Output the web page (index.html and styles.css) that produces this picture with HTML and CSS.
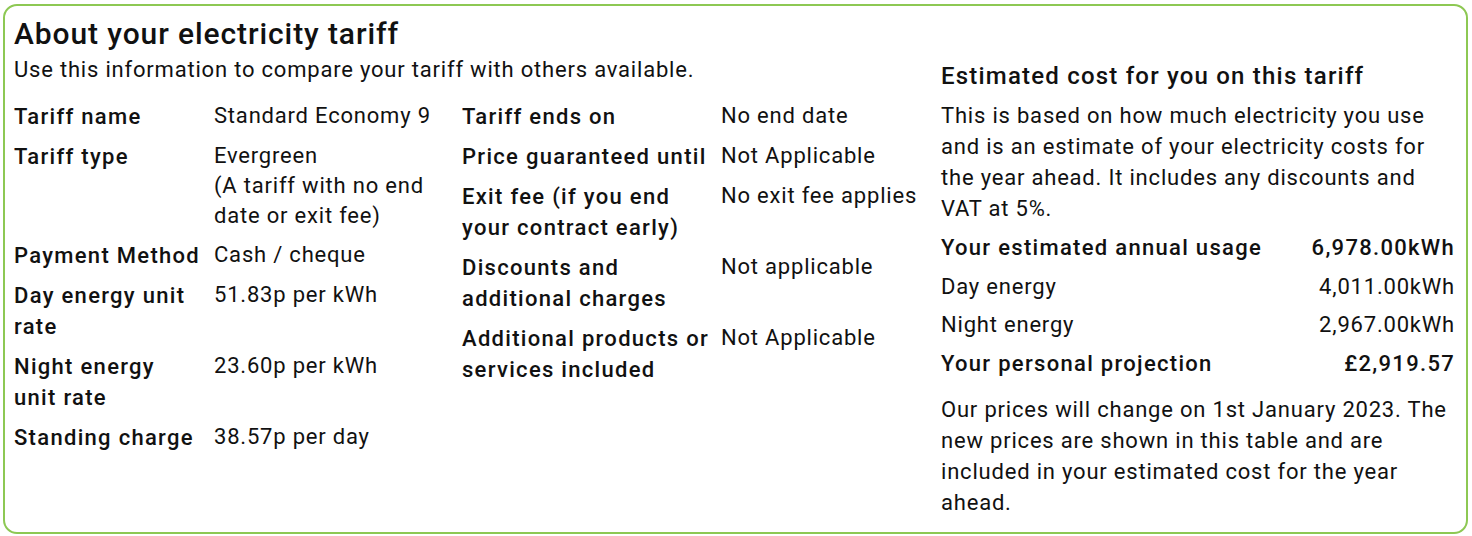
FILE: index.html
```html
<!DOCTYPE html>
<html lang="en">
<head>
<meta charset="utf-8">
<title>About your electricity tariff</title>
<link rel="stylesheet" href="styles.css">
</head>
<body>
<div class="card">
  <section class="about">
    <h1 class="title">About your electricity tariff</h1>
    <p class="subtitle">Use this information to compare your tariff with others available.</p>
    <div class="tables">
      <dl class="facts facts-a">
        <dt>Tariff name</dt><dd>Standard Economy 9</dd>
        <dt>Tariff type</dt><dd>Evergreen<br>(A tariff with no end date or exit fee)</dd>
        <dt>Payment Method</dt><dd>Cash / cheque</dd>
        <dt>Day energy unit rate</dt><dd>51.83p per kWh</dd>
        <dt>Night energy<br>unit rate</dt><dd>23.60p per kWh</dd>
        <dt>Standing charge</dt><dd>38.57p per day</dd>
      </dl>
      <dl class="facts facts-b">
        <dt>Tariff ends on</dt><dd>No end date</dd>
        <dt>Price guaranteed until</dt><dd>Not Applicable</dd>
        <dt>Exit fee (if you end your contract early)</dt><dd>No exit fee applies</dd>
        <dt>Discounts and additional charges</dt><dd>Not applicable</dd>
        <dt>Additional products or services included</dt><dd>Not Applicable</dd>
      </dl>
    </div>
  </section>
  <section class="estimate">
    <h2 class="est-title">Estimated cost for you on this tariff</h2>
    <p class="est-text">This is based on how much electricity you use and is an estimate of your electricity costs for the year ahead. It includes any discounts and VAT at 5%.</p>
    <div class="est-rows">
      <div class="est-row strong"><span>Your estimated annual usage</span><span>6,978.00kWh</span></div>
      <div class="est-row"><span>Day energy</span><span>4,011.00kWh</span></div>
      <div class="est-row"><span>Night energy</span><span>2,967.00kWh</span></div>
      <div class="est-row strong"><span>Your personal projection</span><span>£2,919.57</span></div>
    </div>
    <p class="est-text est-note">Our prices will change on 1st January 2023. The new prices are shown in this table and are included in your estimated cost for the year ahead.</p>
  </section>
</div>
</body>
</html>
```

FILE: styles.css
```css
html, body {
  margin: 0;
  padding: 0;
  background: #ffffff;
}

body {
  font-family: Roboto, "Liberation Sans", Arial, sans-serif;
  color: #111111;
  font-size: 22px;
  letter-spacing: 0.8px;
}

.card {
  box-sizing: border-box;
  margin: 4px 4px 0 3px;
  height: 530px;
  border: 2px solid #8dc853;
  border-radius: 14px;
  display: flex;
  padding: 0 11px 0 9px;
}

.about {
  width: 927px;
  flex: none;
}

.title {
  margin: 11px 0 0;
  font-size: 30px;
  line-height: 34px;
  font-weight: 500;
  letter-spacing: 0.9px;
}

.subtitle {
  margin: 4px 0 0;
  line-height: 30px;
}

.tables {
  display: flex;
  margin-top: 16px;
}

.facts {
  margin: 0;
  display: grid;
  row-gap: 9px;
  align-content: start;
}

.facts dt {
  font-weight: 500;
  letter-spacing: 1.3px;
  line-height: 31px;
}

.facts dd {
  margin: 0;
  line-height: 30px;
}

.facts-a {
  width: 448px;
  grid-template-columns: 192px 226px;
  column-gap: 8px;
}

.facts-b {
  grid-template-columns: 250px 200px;
  column-gap: 9px;
}

.estimate {
  flex: 1;
  padding-top: 55px;
}

.est-title {
  margin: 0;
  font-size: 24px;
  line-height: 30px;
  font-weight: 500;
  letter-spacing: 1.2px;
}

.est-text {
  margin: 9px 0 0;
  line-height: 31px;
}

.est-note {
  margin-top: 15px;
}

.est-rows {
  margin-top: 8px;
  display: flex;
  flex-direction: column;
  row-gap: 7.7px;
  line-height: 31px;
}

.est-row {
  display: flex;
  justify-content: space-between;
}

.est-row.strong {
  font-weight: 500;
  letter-spacing: 1.3px;
}
```
